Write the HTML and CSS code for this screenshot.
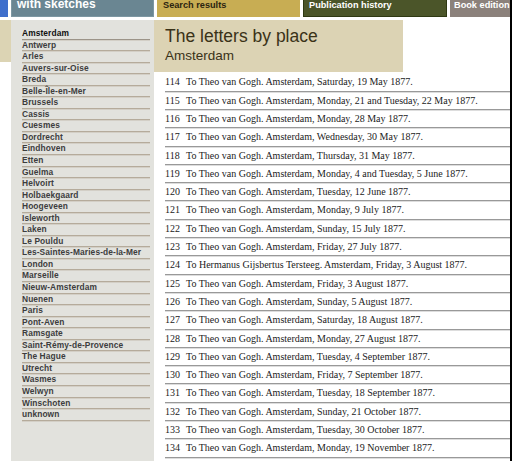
FILE: index.html
```html
<!DOCTYPE html>
<html>
<head>
<meta charset="utf-8">
<link rel="stylesheet" href="styles.css">
</head>
<body>
<div class="page">
  <nav class="tabs">
    <div class="tab tab-blue"></div>
    <div class="tab tab-sketch"><span>with sketches</span></div>
    <div class="tab tab-search"><span>Search results</span></div>
    <div class="tab tab-pub"><span>Publication history</span></div>
    <div class="tab tab-book"><span>Book edition</span></div>
  </nav>
  <div class="wrap">
    <div class="edge"><div class="edge-top"></div></div>
    <aside class="sidebar">
      <ul class="places">
        <li class="current">Amsterdam</li>
        <li>Antwerp</li>
        <li>Arles</li>
        <li>Auvers-sur-Oise</li>
        <li>Breda</li>
        <li>Belle-Île-en-Mer</li>
        <li>Brussels</li>
        <li>Cassis</li>
        <li>Cuesmes</li>
        <li>Dordrecht</li>
        <li>Eindhoven</li>
        <li>Etten</li>
        <li>Guelma</li>
        <li>Helvoirt</li>
        <li>Holbaekgaard</li>
        <li>Hoogeveen</li>
        <li>Isleworth</li>
        <li>Laken</li>
        <li>Le Pouldu</li>
        <li>Les-Saintes-Maries-de-la-Mer</li>
        <li>London</li>
        <li>Marseille</li>
        <li>Nieuw-Amsterdam</li>
        <li>Nuenen</li>
        <li>Paris</li>
        <li>Pont-Aven</li>
        <li>Ramsgate</li>
        <li>Saint-Rémy-de-Provence</li>
        <li>The Hague</li>
        <li>Utrecht</li>
        <li>Wasmes</li>
        <li>Welwyn</li>
        <li>Winschoten</li>
        <li>unknown</li>
      </ul>
    </aside>
    <main class="main">
      <header class="title-box">
        <h1>The letters by place</h1>
        <h2>Amsterdam</h2>
      </header>
      <ul class="letters">
        <li><span class="num">114</span>To Theo van Gogh. Amsterdam, Saturday, 19 May 1877.</li>
        <li><span class="num">115</span>To Theo van Gogh. Amsterdam, Monday, 21 and Tuesday, 22 May 1877.</li>
        <li><span class="num">116</span>To Theo van Gogh. Amsterdam, Monday, 28 May 1877.</li>
        <li><span class="num">117</span>To Theo van Gogh. Amsterdam, Wednesday, 30 May 1877.</li>
        <li><span class="num">118</span>To Theo van Gogh. Amsterdam, Thursday, 31 May 1877.</li>
        <li><span class="num">119</span>To Theo van Gogh. Amsterdam, Monday, 4 and Tuesday, 5 June 1877.</li>
        <li><span class="num">120</span>To Theo van Gogh. Amsterdam, Tuesday, 12 June 1877.</li>
        <li><span class="num">121</span>To Theo van Gogh. Amsterdam, Monday, 9 July 1877.</li>
        <li><span class="num">122</span>To Theo van Gogh. Amsterdam, Sunday, 15 July 1877.</li>
        <li><span class="num">123</span>To Theo van Gogh. Amsterdam, Friday, 27 July 1877.</li>
        <li><span class="num">124</span>To Hermanus Gijsbertus Tersteeg. Amsterdam, Friday, 3 August 1877.</li>
        <li><span class="num">125</span>To Theo van Gogh. Amsterdam, Friday, 3 August 1877.</li>
        <li><span class="num">126</span>To Theo van Gogh. Amsterdam, Sunday, 5 August 1877.</li>
        <li><span class="num">127</span>To Theo van Gogh. Amsterdam, Saturday, 18 August 1877.</li>
        <li><span class="num">128</span>To Theo van Gogh. Amsterdam, Monday, 27 August 1877.</li>
        <li><span class="num">129</span>To Theo van Gogh. Amsterdam, Tuesday, 4 September 1877.</li>
        <li><span class="num">130</span>To Theo van Gogh. Amsterdam, Friday, 7 September 1877.</li>
        <li><span class="num">131</span>To Theo van Gogh. Amsterdam, Tuesday, 18 September 1877.</li>
        <li><span class="num">132</span>To Theo van Gogh. Amsterdam, Sunday, 21 October 1877.</li>
        <li><span class="num">133</span>To Theo van Gogh. Amsterdam, Tuesday, 30 October 1877.</li>
        <li><span class="num">134</span>To Theo van Gogh. Amsterdam, Monday, 19 November 1877.</li>
      </ul>
    </main>
  </div>
</div>
</body>
</html>
```
FILE: styles.css
```css
* { box-sizing: border-box; }
html, body { margin: 0; padding: 0; background: #fff; }
body { overflow: hidden; height: 461px; }
.page {
  width: 512px;
  height: 461px;
  border-right: 2px solid #000;
  background: #fff;
  overflow: hidden;
}
.tabs {
  display: flex;
  gap: 3px;
  height: 17px;
  margin-bottom: 3px;
  font-family: "Liberation Sans", Arial, sans-serif;
  font-weight: bold;
}
.tab {
  height: 17px;
  overflow: hidden;
  padding-left: 6px;
  font-size: 9.2px;
  line-height: 10px;
  white-space: nowrap;
}
.tab-blue { width: 8px; padding: 0; background: #3f6fcc; }
.tab-sketch {
  width: 143px;
  background: #6a8692;
  color: #fff;
  font-size: 12px;
  line-height: 8px;
  border: 1px solid #7d97a2;
  border-top: none;
  padding-left: 5px;
}
.tab-search { width: 143px; background: #c8ad53; color: #2b2410; }
.tab-pub {
  width: 144px;
  background: #4b5529;
  color: #fff;
  border: 1px solid #2f3913;
  border-top: none;
  padding-left: 5px;
}
.tab-book { flex: 1; background: #8b817b; color: #fff; padding-left: 4px; }

.wrap {
  display: flex;
  min-height: 441px;
}
.edge { width: 11px; }
.edge-top { height: 42px; background: #dcd4b4; }

.sidebar {
  width: 143px;
  background: #e2e2dd;
  padding: 8px 4px 0 11px;
}
.places {
  list-style: none;
  margin: 0;
  padding: 0;
  font-family: "Liberation Sans", Arial, sans-serif;
  font-weight: bold;
  font-size: 8.4px;
  letter-spacing: 0.1px;
  color: #3d3d3d;
}
.places li {
  height: 11.55px;
  line-height: 10px;
  border-bottom: 1px solid #b5ab9b;
  box-shadow: 0 1px 0 #d3cfc6;
  white-space: nowrap;
}
.places li.current { color: #111; border-bottom-color: #9c9488; }

.main { flex: 1; }
.title-box {
  width: 249px;
  height: 52px;
  background: #dcd3b4;
  padding: 6px 0 0 11px;
  font-family: "Liberation Sans", Arial, sans-serif;
  color: #3a3218;
}
.title-box h1 {
  margin: 0;
  font-weight: normal;
  font-size: 17.5px;
  line-height: 20px;
}
.title-box h2 {
  margin: 1px 0 0;
  font-weight: normal;
  font-size: 13.5px;
  line-height: 18px;
}
.letters {
  list-style: none;
  margin: 1.4px 0 0 11px;
  padding: 0;
  font-family: "Liberation Serif", "Times New Roman", serif;
  font-size: 10px;
  color: #222;
}
.letters li {
  height: 18.3px;
  line-height: 18px;
  border-bottom: 1px solid #999;
  box-shadow: 0 1px 0 #ddd;
  white-space: nowrap;
}
.num {
  display: inline-block;
  width: 21px;
}
```
